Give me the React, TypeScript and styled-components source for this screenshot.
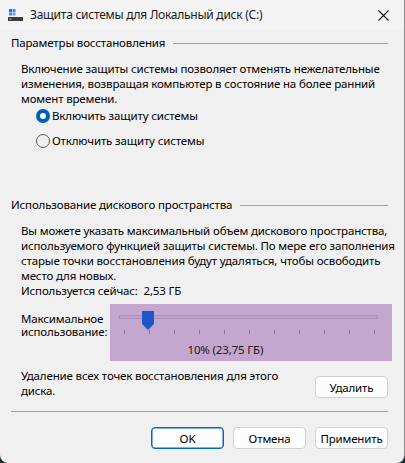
import {FC} from 'react';
import styled, {createGlobalStyle} from 'styled-components';

const GlobalStyle = createGlobalStyle`
  html, body {
    margin: 0;
    padding: 0;
    background: #1f2a2a;
  }
  * {
    box-sizing: border-box;
  }
`

const ticks = Array.from({length: 11}, (_, i) => i)

const App: FC = () => {
    return (
        <>
            <GlobalStyle/>
            <Window>
                <TitleBar>
                    <DriveIcon/>
                    <Title>Защита системы для Локальный диск (C:)</Title>
                    <CloseButton aria-label="Закрыть">
                        <svg width="11" height="11" viewBox="0 0 11 11">
                            <path d="M0.5 0.5 L10.5 10.5 M10.5 0.5 L0.5 10.5" stroke="#1a1a1a" strokeWidth="1.1"/>
                        </svg>
                    </CloseButton>
                </TitleBar>
                <Body>
                    <GroupHeading>
                        <span>Параметры восстановления</span>
                        <Rule/>
                    </GroupHeading>
                    <Paragraph>
                        Включение защиты системы позволяет отменять нежелательные<br/>
                        изменения, возвращая компьютер в состояние на более ранний<br/>
                        момент времени.
                    </Paragraph>
                    <RadioList>
                        <RadioRow>
                            <Radio $checked/>
                            <span>Включить защиту системы</span>
                        </RadioRow>
                        <RadioRow>
                            <Radio/>
                            <span>Отключить защиту системы</span>
                        </RadioRow>
                    </RadioList>

                    <GroupHeading $top={48}>
                        <span>Использование дискового пространства</span>
                        <Rule/>
                    </GroupHeading>
                    <Paragraph>
                        Вы можете указать максимальный объем дискового пространства,<br/>
                        используемого функцией защиты системы. По мере его заполнения<br/>
                        старые точки восстановления будут удаляться, чтобы освободить<br/>
                        место для новых.
                    </Paragraph>
                    <UsedNow>Используется сейчас:&nbsp;&nbsp;2,53 ГБ</UsedNow>

                    <SliderRow>
                        <SliderLabel>Максимальное<br/>использование:</SliderLabel>
                        <SliderPanel>
                            <TrackArea>
                                <Track/>
                                <Thumb>
                                    <svg width="12" height="19" viewBox="0 0 12 19">
                                        <path d="M0 0 H12 V13 L6 19 L0 13 Z" fill="#1e55c8"/>
                                    </svg>
                                </Thumb>
                            </TrackArea>
                            <Ticks>
                                {ticks.map(t => <Tick key={t}/>)}
                            </Ticks>
                            <SliderValue>10% (23,75 ГБ)</SliderValue>
                        </SliderPanel>
                    </SliderRow>

                    <DeleteRow>
                        <DeleteText>Удаление всех точек восстановления для этого<br/>диска.</DeleteText>
                        <DeleteButton>Удалить</DeleteButton>
                    </DeleteRow>
                </Body>
                <Footer>
                    <Button $primary>OK</Button>
                    <Button>Отмена</Button>
                    <Button>Применить</Button>
                </Footer>
            </Window>
        </>
    );
};

export default App;

const DriveIcon: FC = () => (
    <IconBox>
        <svg width="15" height="12" viewBox="0 0 15 12">
            <rect x="1" y="0" width="3" height="3" fill="#1a73d9"/>
            <rect x="4.5" y="0" width="3" height="3" fill="#3c8ee6"/>
            <rect x="1" y="3.5" width="3" height="3" fill="#3c8ee6"/>
            <rect x="4.5" y="3.5" width="3" height="3" fill="#5aa5f0"/>
            <rect x="0" y="8" width="15" height="4" rx="0.5" fill="#3b3b3b"/>
            <rect x="1.5" y="9.5" width="2" height="1.2" fill="#5ee06a"/>
        </svg>
    </IconBox>
)

const Window = styled.div`
  width: 405px;
  height: 463px;
  background: #f0f0f0;
  border-radius: 0 0 8px 8px;
  border-right: 1px solid #8a8a8a;
  display: flex;
  flex-direction: column;
  font-family: "Noto Sans", sans-serif;
  font-size: 11.5px;
  letter-spacing: -0.15px;
  color: #000;
  overflow: hidden;
  white-space: nowrap;
`

const TitleBar = styled.div`
  height: 30px;
  flex-shrink: 0;
  background: #f3f3f3;
  display: flex;
  align-items: center;
  padding-left: 8px;
`

const IconBox = styled.div`
  display: flex;
  width: 15px;
  height: 12px;
  margin-top: -1px;
`

const Title = styled.div`
  margin-left: 7px;
  color: #1a1a1a;
  flex: 1;
  margin-top: -1px;
  font-size: 12px;
  letter-spacing: -0.25px;
`

const CloseButton = styled.div`
  width: 46px;
  height: 30px;
  display: flex;
  align-items: center;
  justify-content: center;
  margin-right: -2px;
`

const Body = styled.div`
  display: flex;
  flex-direction: column;
  padding: 0 16px 0 11px;
`

const GroupHeading = styled.div<{ $top?: number }>`
  display: flex;
  align-items: center;
  gap: 8px;
  margin-top: ${props => props.$top ?? 5}px;
  line-height: 16px;
  color: #000;
`

const Rule = styled.div`
  flex: 1;
  height: 1px;
  background: #a0a0a0;
`

const Paragraph = styled.p`
  margin: 10px 0 0 10px;
  line-height: 15px;
`

const RadioList = styled.div`
  display: flex;
  flex-direction: column;
  gap: 9px;
  margin: 2px 0 0 25px;
`

const RadioRow = styled.label`
  display: flex;
  align-items: center;
  gap: 2px;
  line-height: 16px;
`

const Radio = styled.span<{ $checked?: boolean }>`
  width: 14px;
  height: 14px;
  border-radius: 50%;
  flex-shrink: 0;
  background: ${props => props.$checked ? '#fff' : 'transparent'};
  border: ${props => props.$checked ? '4px solid #005fb8' : '1px solid #5a5a5a'};
`

const UsedNow = styled.div`
  margin: 0 0 0 10px;
  line-height: 15px;
`

const SliderRow = styled.div`
  display: flex;
  align-items: flex-start;
  margin-top: 6px;
`

const SliderLabel = styled.div`
  width: 89px;
  margin: 8px 0 0 10px;
  line-height: 13px;
`

const SliderPanel = styled.div`
  width: 283px;
  height: 57px;
  margin-right: -4px;
  background: #c5a6cf;
  display: flex;
  flex-direction: column;
  padding: 6px 14px 0 9px;
`

const TrackArea = styled.div`
  position: relative;
  height: 19px;
  display: flex;
  align-items: center;
`

const Track = styled.div`
  width: 100%;
  height: 4px;
  margin-top: -6px;
  background: #c0a0cb;
  border: 1px solid #b08fbb;
`

const Thumb = styled.div`
  position: absolute;
  left: 23px;
  top: 1px;
  display: flex;
`

const Ticks = styled.div`
  display: flex;
  justify-content: space-between;
  padding: 0 3px 0 5px;
  margin-top: 1px;
`

const Tick = styled.span`
  width: 1px;
  height: 4px;
  background: #8c7396;
`

const SliderValue = styled.div`
  margin-top: 8px;
  padding-right: 46px;
  text-align: center;
  line-height: 15px;
  color: #1a1a1a;
`

const DeleteRow = styled.div`
  display: flex;
  justify-content: space-between;
  align-items: flex-start;
  margin-top: 7px;
`

const DeleteText = styled.div`
  margin-left: 10px;
  line-height: 15px;
`

const Button = styled.button<{ $primary?: boolean }>`
  width: 73px;
  height: 22px;
  padding: 0;
  font-family: inherit;
  font-size: 11.5px;
  letter-spacing: -0.15px;
  color: #000;
  background: #fdfdfd;
  border: 1px solid ${props => props.$primary ? '#0067c0' : '#d0d0d0'};
  box-shadow: ${props => props.$primary ? 'inset 0 0 0 0.5px #0067c0' : 'none'};
  border-radius: 4px;
`

const DeleteButton = styled(Button)`
  margin-top: 8px;
`

const Footer = styled.div`
  display: flex;
  justify-content: flex-end;
  gap: 9px;
  margin: 13px 16px 0 11px;
  padding-top: 15px;
  border-top: 1px solid #a0a0a0;
`
